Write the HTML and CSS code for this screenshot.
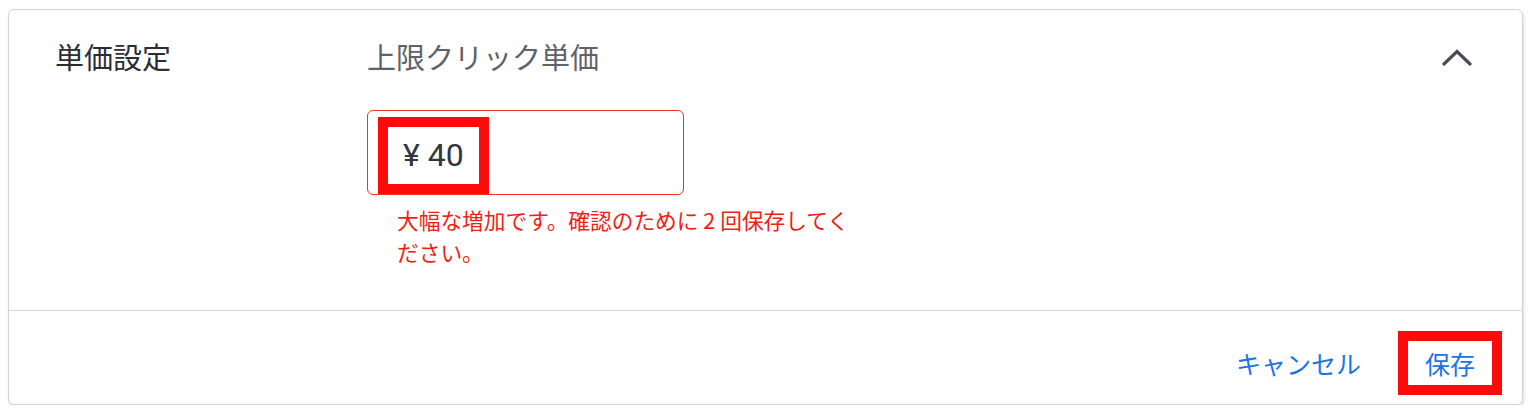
FILE: index.html
```html
<!DOCTYPE html>
<html lang="ja">
<head>
<meta charset="utf-8">
<link rel="stylesheet" href="styles.css">
</head>
<body>
<div class="card">
  <div class="section">
    <div class="label">単価設定</div>
    <div class="content">
      <div class="title">上限クリック単価</div>
      <div class="input">
        <span class="value">¥ 40</span>
        <span class="mark mark-input"></span>
      </div>
      <div class="error">大幅な増加です。確認のために 2 回保存してく<br>ださい。</div>
    </div>
    <div class="toggle">
      <svg width="30" height="18" viewBox="0 0 30 18"><path d="M2 16 L15 3.5 L28 16" fill="none" stroke="#4a4d55" stroke-width="3.2" stroke-linecap="round" stroke-linejoin="miter"/></svg>
    </div>
  </div>
  <div class="footer">
    <button class="btn">キャンセル</button>
    <button class="btn btn-save">保存<span class="mark mark-save"></span></button>
  </div>
</div>
</body>
</html>
```

FILE: styles.css
```css
html, body {
  margin: 0;
  padding: 0;
  background: #ffffff;
}
body {
  padding: 9px 9px 0 8px;
  font-family: "Noto Sans CJK JP", "Noto Sans", Roboto, sans-serif;
}
.card {
  border: 1px solid #d3d2dc;
  border-radius: 6px;
  box-shadow: 1px 2px 3px rgba(60, 64, 67, 0.18);
  background: #fff;
}
.section {
  display: grid;
  grid-template-columns: 312px 1fr auto;
  padding: 26px 50px 42px 46px;
}
.label {
  font-size: 29px;
  line-height: 40px;
  color: #2a2d33;
}
.title {
  font-size: 29px;
  line-height: 40px;
  color: #5f6368;
}
.toggle {
  padding-top: 12px;
}
.toggle svg {
  display: block;
}
.input {
  position: relative;
  margin-top: 34px;
  width: 280px;
  height: 83px;
  border: 1px solid #f0321f;
  border-radius: 6px;
  display: flex;
  align-items: center;
  padding-left: 35px;
  box-sizing: content-box;
}
.value {
  font-family: Roboto, "Noto Sans", sans-serif;
  font-size: 32px;
  font-weight: 400;
  color: #32363e;
  padding-top: 5px;
}
.mark {
  position: absolute;
  border: 10px solid #ff0a0a;
  box-sizing: border-box;
}
.mark-input {
  left: 10px;
  top: 6px;
  width: 111px;
  height: 77px;
}
.error {
  margin-top: 9px;
  padding-left: 30px;
  font-size: 21.7px;
  line-height: 32px;
  color: #f01e14;
}
.footer {
  border-top: 1px solid #d6d5dd;
  display: flex;
  justify-content: flex-end;
  gap: 30px;
  padding: 29px 30px 18px 0;
}
.btn {
  position: relative;
  font-family: "Noto Sans CJK JP", sans-serif;
  font-size: 25px;
  line-height: 46px;
  height: 46px;
  padding: 0 17px;
  border: none;
  background: none;
  color: #1a73e8;
  cursor: pointer;
}
.mark-save {
  left: -10px;
  top: -9px;
  right: -10px;
  bottom: -9px;
}
```
